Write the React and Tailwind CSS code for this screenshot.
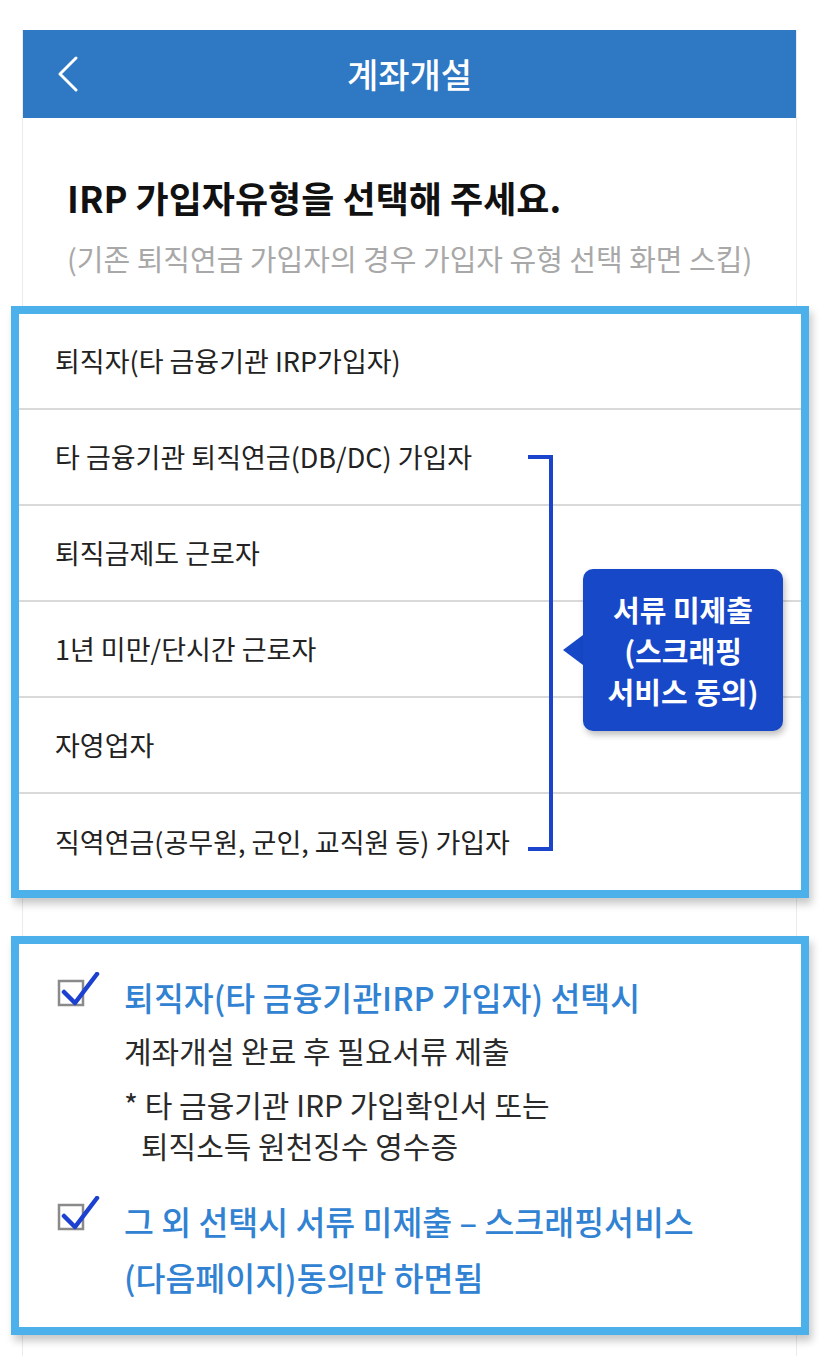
import { useState } from "react";

const options = [
  "퇴직자(타 금융기관 IRP가입자)",
  "타 금융기관 퇴직연금(DB/DC) 가입자",
  "퇴직금제도 근로자",
  "1년 미만/단시간 근로자",
  "자영업자",
  "직역연금(공무원, 군인, 교직원 등) 가입자",
];

const font = { fontFamily: '"Noto Sans CJK KR", "Noto Sans", sans-serif' };

function CheckIcon() {
  return (
    <svg width="44" height="40" viewBox="0 0 44 40" className="block">
      <rect x="2" y="9" width="24" height="24" fill="white" stroke="#8a8a8a" strokeWidth="2.5" />
      <path d="M7 20 L18 31 L40 2" fill="none" stroke="#1c40d0" strokeWidth="4.5" strokeLinecap="round" strokeLinejoin="round" />
    </svg>
  );
}

export default function App() {
  const [selected, setSelected] = useState(null);

  return (
    <div className="min-h-[1357px] bg-white pt-[30px]" style={font}>
      <div className="ml-[22px] w-[775px] border-x border-[#ebebeb] pb-[21px]">
        {/* header */}
        <div className="grid h-[88px] grid-cols-[1fr_auto_1fr] items-center bg-[#2e78c4]">
          <div className="pl-[34px]">
            <svg width="22" height="36" viewBox="0 0 22 36" className="block">
              <path d="M19 2 L3 18 L19 34" fill="none" stroke="white" strokeWidth="3" strokeLinecap="round" strokeLinejoin="round" />
            </svg>
          </div>
          <h1 className="text-[34px] font-medium leading-none text-white">계좌개설</h1>
          <div />
        </div>

        {/* title */}
        <div className="pl-[44px]">
          <h2 className="mt-[57px] text-[36px] font-bold leading-[44px] text-[#111]">
            IRP 가입자유형을 선택해 주세요.
          </h2>
          <p className="mt-[21px] text-[29px] leading-[36px] text-[#a8a8a8]">
            (기존 퇴직연금 가입자의 경우 가입자 유형 선택 화면 스킵)
          </p>
        </div>

        {/* option list */}
        <div className="relative -ml-[12px] -mr-[13px] mt-[30px] border-[8px] border-[#4cb1ea] bg-white shadow-[3px_6px_8px_rgba(0,0,0,0.22)]">
          {options.map((label, i) => (
            <button
              key={label}
              onClick={() => setSelected(i)}
              className={`flex w-full items-center pl-[36px] text-left text-[27px] text-[#222] ${
                i < options.length - 1 ? "h-[96px] border-b-2 border-[#d9d9d9]" : "h-[96px]"
              } ${selected === i ? "bg-[#f3f8fd]" : "bg-white"}`}
            >
              {label}
            </button>
          ))}

          {/* bracket */}
          <div className="absolute left-[509px] top-[141px] h-[396px] w-[25px] border-y-4 border-r-4 border-[#1a44cc]" />

          {/* callout */}
          <div className="absolute left-[544px] top-[255px] flex">
            <div className="mt-[66px] h-0 w-0 border-y-[15px] border-r-[20px] border-y-transparent border-r-[#1748c8]" />
            <div className="flex h-[162px] w-[200px] flex-col items-center justify-center rounded-[10px] bg-[#1748c8] text-[29px] font-bold leading-[41px] text-white shadow-[2px_4px_6px_rgba(0,0,0,0.25)]">
              <span>서류 미제출</span>
              <span>(스크래핑</span>
              <span>서비스 동의)</span>
            </div>
          </div>
        </div>

        {/* notice box */}
        <div className="-ml-[12px] -mr-[13px] mt-[38px] border-[8px] border-[#4cb1ea] bg-white pb-[22px] pl-[38px] pt-[27px] shadow-[3px_6px_8px_rgba(0,0,0,0.22)]">
          <div className="flex">
            <div className="w-[67px] pt-[1px]">
              <CheckIcon />
            </div>
            <div>
              <p className="text-[32.5px] font-medium leading-[52px] text-[#3182d2]">
                퇴직자(타 금융기관IRP 가입자) 선택시
              </p>
              <p className="text-[30px] leading-[54px] text-[#2a2a2a]">
                계좌개설 완료 후 필요서류 제출
              </p>
              <p className="mt-[7px] text-[30px] leading-[41px] text-[#2a2a2a]">
                * 타 금융기관 IRP 가입확인서 또는
              </p>
              <p className="pl-[17px] text-[30px] leading-[41px] text-[#2a2a2a]">
                퇴직소득 원천징수 영수증
              </p>
            </div>
          </div>
          <div className="mt-[27px] flex">
            <div className="w-[67px] pt-[3px]">
              <CheckIcon />
            </div>
            <div className="text-[32.5px] font-medium leading-[56px] text-[#3182d2]">
              <p>그 외 선택시 서류 미제출 – 스크래핑서비스</p>
              <p>(다음페이지)동의만 하면됨</p>
            </div>
          </div>
        </div>
      </div>
    </div>
  );
}
